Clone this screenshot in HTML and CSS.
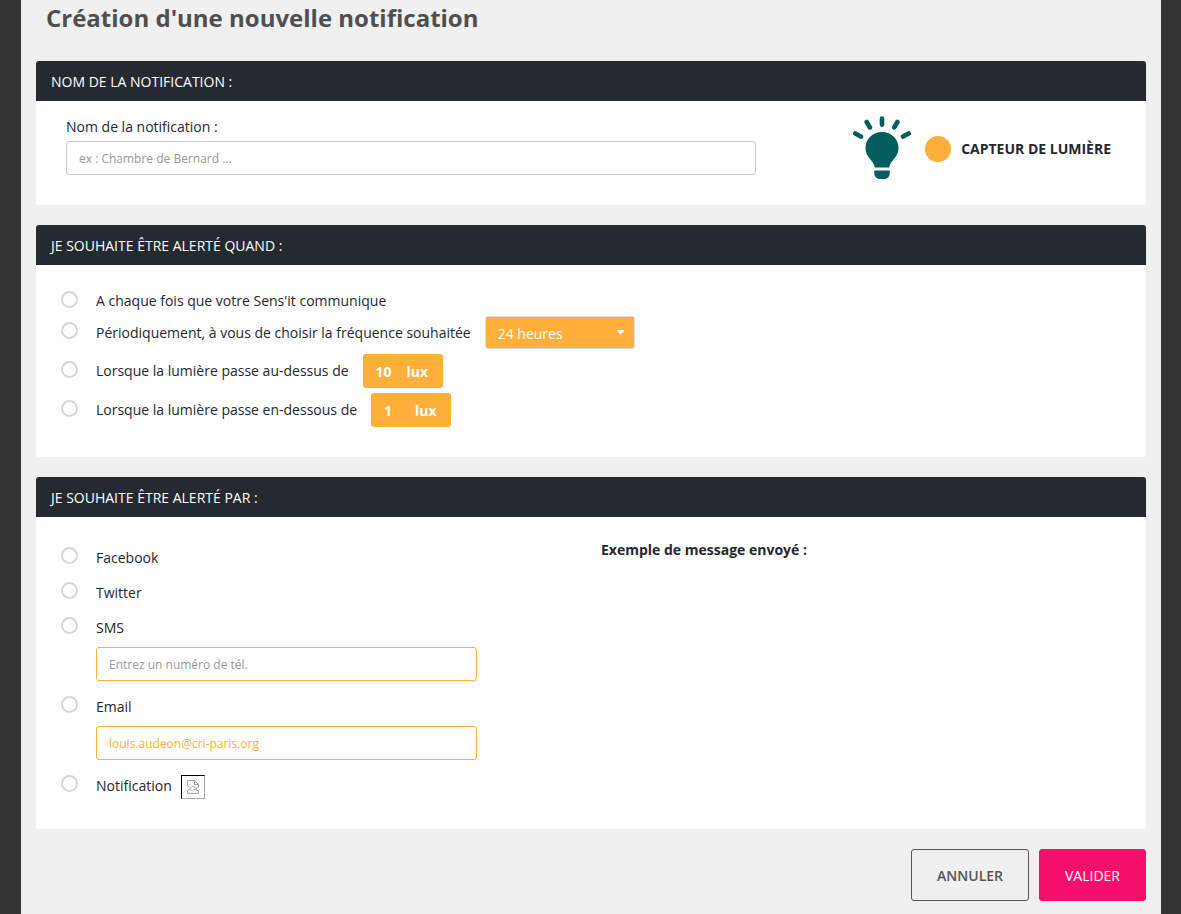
FILE: index.html
```html
<!DOCTYPE html>
<html lang="fr">
<head>
<meta charset="utf-8">
<meta name="viewport" content="width=device-width, initial-scale=1">
<title>Création d'une nouvelle notification</title>
<link rel="stylesheet" href="styles.css">
</head>
<body>
<main class="page">
  <h1 class="page-title">Création d'une nouvelle notification</h1>
  <form class="form">
    <section class="panel">
      <h2 class="panel-title">Nom de la notification :</h2>
      <div class="panel-body name-body">
        <div class="name-field">
          <label class="field-label" for="name">Nom de la notification :</label>
          <input class="text-input" id="name" type="text" placeholder="ex : Chambre de Bernard ...">
        </div>
        <div class="sensor">
          <svg class="bulb" viewBox="0 0 58 63" aria-hidden="true">
            <g stroke="#005f5c" stroke-width="4.6" stroke-linecap="round">
              <path d="M29 2.6v6M13.7 6l3.2 5.4M44.4 6l-3.2 5.4M2.3 17.5l5.6 3.1M55.7 17.5l-5.6 3.1"/>
            </g>
            <path fill="#005f5c" d="M29 16c-9.500 0-16.500 7-16.500 16 0 5 2 8 4.600 11 2.600 3.200 4.200 5.500 4.700 8.500h14.400c.5-3 2.100-5.300 4.700-8.500 2.600-3 4.600-6 4.600-11 0-9-7-16-16.500-16z"/>
            <path fill="#005f5c" d="M21.300 54.400h15.400v2.600c0 3.500-2.300 6-5.700 6h-4c-3.400 0-5.700-2.500-5.700-6z"/>
          </svg>
          <span class="dot"></span>
          <strong class="sensor-name">Capteur de lumière</strong>
        </div>
      </div>
    </section>

    <section class="panel">
      <h2 class="panel-title">Je souhaite être alerté quand :</h2>
      <div class="panel-body when-body">
        <div class="option">
          <input class="radio" type="radio" name="when" id="when-each">
          <label for="when-each">A chaque fois que votre Sens'it communique</label>
        </div>
        <div class="option">
          <input class="radio" type="radio" name="when" id="when-period">
          <label for="when-period">Périodiquement, à vous de choisir la fréquence souhaitée</label>
          <span class="select-wrap">
            <select class="select" aria-label="Fréquence">
              <option>24 heures</option>
              <option>12 heures</option>
            </select>
            <svg class="caret" viewBox="0 0 8 5" aria-hidden="true"><path fill="#fff" d="M0 0h8L4 5z"/></svg>
          </span>
        </div>
        <div class="option">
          <input class="radio" type="radio" name="when" id="when-above">
          <label for="when-above">Lorsque la lumière passe au-dessus de</label>
          <label class="amount"><input class="amount-input" type="text" value="10"><span>lux</span></label>
        </div>
        <div class="option">
          <input class="radio" type="radio" name="when" id="when-below">
          <label for="when-below">Lorsque la lumière passe en-dessous de</label>
          <label class="amount"><input class="amount-input" type="text" value="1"><span>lux</span></label>
        </div>
      </div>
    </section>

    <section class="panel">
      <h2 class="panel-title">Je souhaite être alerté par :</h2>
      <div class="panel-body by-body">
        <div class="channels">
          <div class="channel">
            <input class="radio" type="radio" name="by" id="by-facebook">
            <label for="by-facebook">Facebook</label>
          </div>
          <div class="channel">
            <input class="radio" type="radio" name="by" id="by-twitter">
            <label for="by-twitter">Twitter</label>
          </div>
          <div class="channel">
            <input class="radio" type="radio" name="by" id="by-sms">
            <label for="by-sms">SMS</label>
            <input class="text-input accent" type="tel" aria-label="Numéro de téléphone" placeholder="Entrez un numéro de tél.">
          </div>
          <div class="channel">
            <input class="radio" type="radio" name="by" id="by-email">
            <label for="by-email">Email</label>
            <input class="text-input accent" type="email" aria-label="Adresse email" value="louis.audeon@cri-paris.org">
          </div>
          <div class="channel">
            <input class="radio" type="radio" name="by" id="by-notification">
            <label class="with-image" for="by-notification">Notification
              <span class="image-box">
                <svg width="14" height="14" viewBox="0 0 14 14" fill="none" stroke="#a6a6a6" aria-hidden="true">
                  <path d="M1.500 5.500v-5h7l4 4v3M8.500.5v4h4"/>
                  <path d="M1.500 5.500l3 2.500L7 6l3 2.500 2.500-1.500M1.500 13.500v-3L4 9l2.500 2L9 9l3.500 2v2.500z"/>
                </svg>
              </span>
            </label>
          </div>
        </div>
        <h3 class="example-title">Exemple de message envoyé :</h3>
      </div>
    </section>

    <div class="actions">
      <button class="button button-outline" type="button">Annuler</button>
      <button class="button button-primary" type="submit">Valider</button>
    </div>
  </form>
</main>
</body>
</html>
```
FILE: styles.css
```css
* {
  box-sizing: border-box;
}

body {
  margin: 0;
  padding: 0 20px 0 21px;
  background: #333;
  color: #252830;
  font: 14px/20px "Open Sans", "Noto Sans", sans-serif;
}

input,
select,
button {
  margin: 0;
  font-family: inherit;
}

.page {
  min-height: 100vh;
  padding: 0 15px 12px;
  background: #f0f0f0;
}

.page-title {
  margin: 0;
  padding: 2px 10px 27px;
  color: #4f4f4f;
  font-size: 24px;
  line-height: 32px;
}

.form {
  display: flex;
  flex-direction: column;
  gap: 20px;
}

.panel {
  overflow: hidden;
  border-radius: 3px;
  background: #fff;
}

.panel-title {
  margin: 0;
  padding: 11px 15px 9px;
  background: #252a31;
  color: #fff;
  font-size: 14px;
  font-weight: 400;
  line-height: 20px;
  text-transform: uppercase;
}

.name-body {
  display: grid;
  grid-template-columns: 2fr 1fr;
}

.name-field {
  padding: 16px 20px 30px 30px;
}

.field-label {
  display: block;
  margin-bottom: 4px;
}

.text-input {
  display: block;
  width: 100%;
  height: 34px;
  padding: 6px 12px;
  border: 1px solid #cacad2;
  border-radius: 3px;
  background: #fff;
  font-size: 12px;
}

.text-input::placeholder {
  color: #999;
  opacity: 1;
}

.sensor {
  display: flex;
  align-items: center;
  justify-content: flex-end;
  padding: 0 35px 9px 0;
}

.bulb {
  width: 58px;
  height: 63px;
  margin: 0 14px 2px 0;
}

.dot {
  width: 26px;
  height: 26px;
  margin-right: 10px;
  border-radius: 50%;
  background: #ffaf3a;
}

.sensor-name {
  text-transform: uppercase;
}

.when-body {
  display: flex;
  flex-direction: column;
  gap: 5px;
  padding: 26px 25px 30px;
}

.option {
  display: flex;
  align-items: center;
}

.option label {
  margin-right: 14px;
}

.radio {
  flex: none;
  appearance: none;
  width: 17px;
  height: 17px;
  margin: -1px 18px 3px 0;
  border: 2px solid #d7d7d7;
  border-radius: 50%;
  background: #fff;
}

.radio:checked {
  background: #ffaf3a;
}

.select-wrap {
  position: relative;
}

.select {
  display: block;
  appearance: none;
  width: 150px;
  height: 33px;
  padding: 2px 28px 0 12px;
  border: 1px solid #dedede;
  border-radius: 3px;
  background: #ffaf3a;
  color: #fff;
  font-size: 14px;
}

.caret {
  position: absolute;
  top: 14px;
  right: 10px;
  width: 9px;
  height: 5px;
  pointer-events: none;
}

.amount {
  display: flex;
  align-items: center;
  width: 80px;
  height: 34px;
  padding: 1px 0 0 13px;
  border-radius: 3px;
  background: #ffaf3a;
  color: #fff;
  font-weight: 700;
}

.amount-input {
  width: 31px;
  height: 20px;
  padding: 0;
  border: 0;
  background: none;
  color: inherit;
  font-size: 14px;
  font-weight: 700;
  line-height: 20px;
}

.by-body {
  display: grid;
  grid-template-columns: 1fr 1fr;
}

.channels {
  display: flex;
  flex-direction: column;
  gap: 16px;
  padding: 31px 0 34px 25px;
}

.channel {
  display: grid;
  grid-template-columns: 35px 1fr;
  align-items: center;
  row-gap: 10px;
  line-height: 19px;
}

.channel .accent {
  grid-column: 2;
  width: 77%;
  border-color: #ffaf3a;
  color: #ffaf3a;
}

.with-image {
  display: flex;
  align-items: center;
  gap: 9px;
}

.image-box {
  display: flex;
  align-items: center;
  justify-content: center;
  width: 24px;
  height: 24px;
  margin: -1px 0 -4px;
  border: 1px solid #a9a9a9;
  border-top-color: #000;
  border-left-color: #000;
}

.example-title {
  margin: 0;
  padding: 23px 10px;
  font-size: 14px;
  line-height: 20px;
}

.actions {
  display: flex;
  justify-content: flex-end;
  gap: 10px;
}

.button {
  height: 52px;
  padding: 0 25px;
  border: 1px solid #555;
  border-radius: 3px;
  background: none;
  color: #555;
  font-size: 14px;
  text-transform: uppercase;
}

.button-outline {
  font-weight: 600;
}

.button-primary {
  border-color: #f60f6b;
  background: #f60f6b;
  color: #fff;
}
```
